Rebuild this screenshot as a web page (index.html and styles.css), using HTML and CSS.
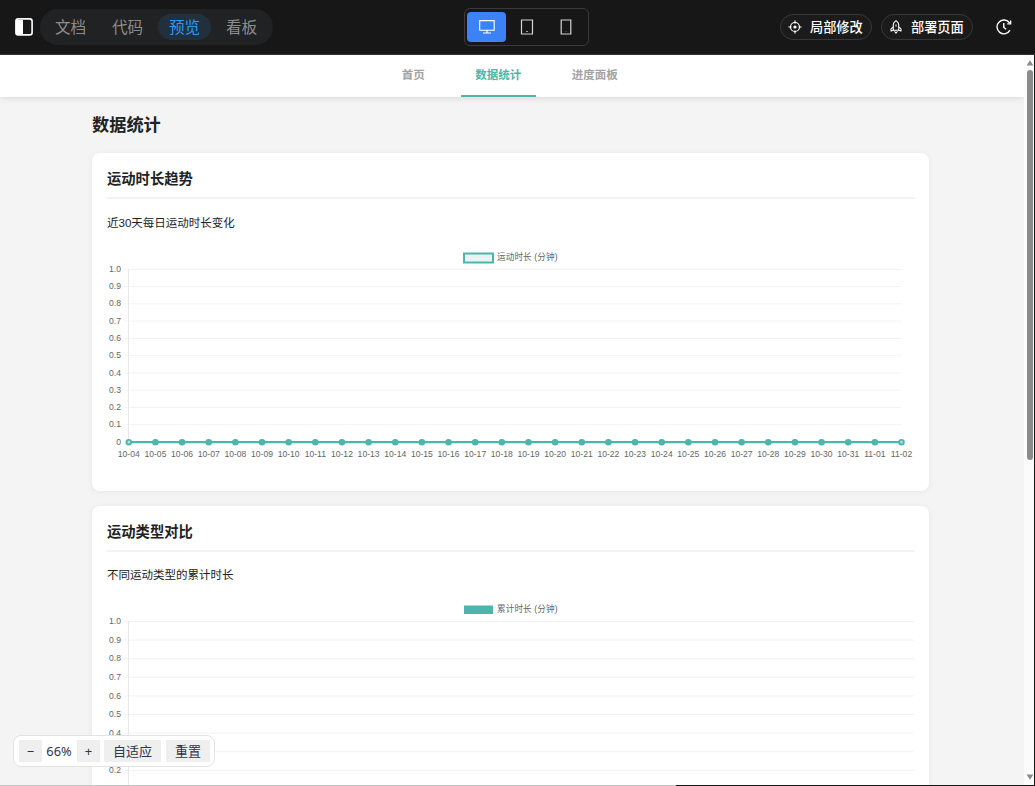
FILE: index.html
```html
<!DOCTYPE html>
<html lang="zh-CN">
  <head>
    <meta charset="utf-8">
    <title>数据统计</title>
    <link rel="stylesheet" href="styles.css">
  </head>
  <body>
    <header class="topbar">
      <div class="topbar-left">
        <svg class="icon-panel" width="18" height="18" viewBox="0 0 18 18">
          <rect x="0.9" y="0.9" width="16.2" height="16" rx="2.4" fill="none" stroke="#fff" stroke-width="1.6"/>
          <path d="M1 2h7v14H1z" fill="#fff"/>
        </svg>
        <nav class="mode-tabs">
          <a class="mode">文档</a>
          <a class="mode">代码</a>
          <a class="mode active">预览</a>
          <a class="mode">看板</a>
        </nav>
      </div>
      <div class="devices">
        <button class="device active">
          <svg width="16" height="14" viewBox="0 0 16 14" fill="none" stroke="#fff">
            <path d="M0.7 0.6h14.5v9.6H0.7z" stroke-width="1.1"/>
            <path d="M8 10v3M4 13h8" stroke-width="1.2"/>
          </svg>
        </button>
        <button class="device">
          <svg width="14" height="16" viewBox="0 0 14 16" fill="none" stroke="#d4d4d4">
            <path d="M1.5 1h11v14h-11z" stroke-width="1.2"/>
            <path d="M6.3 12.5h1.4" stroke-width="1.1"/>
          </svg>
        </button>
        <button class="device">
          <svg width="12" height="16" viewBox="0 0 12 16" fill="none" stroke="#d4d4d4">
            <path d="M1.2 1h9.6v14H1.2z" stroke-width="1.2"/>
            <path d="M5.5 12.5h1" stroke="#666"/>
          </svg>
        </button>
      </div>
      <div class="actions">
        <button class="action">
          <svg width="14" height="14" viewBox="0 0 14 14" fill="none" stroke="#fff" stroke-width="1.2">
            <circle cx="7" cy="7" r="4.5"/>
            <circle cx="7" cy="7" r="1.6" fill="#fff" stroke="none"/>
            <path d="M7 0.4v3M7 10.6v3M0.4 7h3M10.6 7h3"/>
          </svg>
          局部修改
        </button>
        <button class="action">
          <svg width="14" height="14" viewBox="0 0 14 14" fill="none" stroke="#fff" stroke-width="1.05" stroke-linejoin="round">
            <path d="M4.3 10.3V4.6C4.3 3 5.5 1.5 7 0.7c1.5 0.8 2.7 2.3 2.7 3.9v5.7z"/>
            <path d="M4.3 6.8L2 9v2.1l2.3-0.8M9.7 6.8L12 9v2.1l-2.3-0.8"/>
            <path d="M7 4.6v2"/>
            <path d="M5.5 11.2L7 13.2l1.5-2"/>
          </svg>
          部署页面
        </button>
        <svg class="icon-history" width="16" height="16" viewBox="0 0 16 16" fill="none" stroke="#fff" stroke-width="1.4">
          <path d="M14 11.2A6.9 6.9 0 1 1 13.6 4"/>
          <path d="M14.6 1.5v3.4h-3.4"/>
          <path d="M7.8 4v4.5l2.4 1.8"/>
        </svg>
      </div>
    </header>

    <div class="preview">
      <main class="page">
        <nav class="page-nav">
          <a class="nav-item">首页</a>
          <a class="nav-item active">数据统计</a>
          <a class="nav-item">进度面板</a>
        </nav>
        <div class="container">
          <h1>数据统计</h1>
          <section class="card">
            <h2>运动时长趋势</h2>
            <p>近30天每日运动时长变化</p>
            <svg class="chart" id="trendChart" width="808" height="232"></svg>
          </section>
          <section class="card">
            <h2>运动类型对比</h2>
            <p class="type-note">不同运动类型的累计时长</p>
            <svg class="chart" id="typeChart" width="808" height="232"></svg>
          </section>
        </div>
      </main>
      <div class="scrollbar">
        <svg width="8" height="6" viewBox="0 0 8 6"><path d="M4 0.3L7.4 5.4H0.6z" fill="#8b8b8b"/></svg>
        <div class="thumb"></div>
        <svg class="arrow-down" width="8" height="6" viewBox="0 0 8 6"><path d="M4 5.7L7.4 0.6H0.6z" fill="#8b8b8b"/></svg>
      </div>
    </div>
    <div class="bottom-line"></div>

    <div class="zoom-bar">
      <button class="zoom-btn">−</button>
      <span class="zoom-value">66%</span>
      <button class="zoom-btn">+</button>
      <button class="zoom-btn wide fit">自适应</button>
      <button class="zoom-btn wide">重置</button>
    </div>
    <script src="charts.js"></script>
  </body>
</html>
```
FILE: styles.css
```css
* {
  box-sizing: border-box;
}
body {
  margin: 0;
  height: 786px;
  overflow: hidden;
  display: flex;
  flex-direction: column;
  background-color: #171717;
  font-family: "Liberation Sans", "Noto Sans CJK SC", sans-serif;
  color: #222;
}
button {
  border: 0;
  padding: 0;
  font-family: "Noto Sans", "Noto Sans CJK SC", sans-serif;
}

/* top bar */
.topbar {
  height: 55px;
  flex: none;
  display: grid;
  grid-template-columns: 464px 125px 1fr;
  align-items: center;
  border-bottom: 1px solid #333;
  background-color: #171717;
}
.topbar-left {
  display: flex;
  align-items: center;
  padding-left: 15px;
  gap: 7px;
}
.mode-tabs {
  display: flex;
  align-items: center;
  gap: 4px;
  width: 233px;
  height: 36px;
  padding-left: 4px;
  border-radius: 18px;
  background-color: #212223;
}
.mode {
  width: 53px;
  height: 26px;
  line-height: 25px;
  border-radius: 13px;
  text-align: center;
  font-family: "Noto Sans CJK SC", sans-serif;
  font-size: 15.6px;
  color: #8c8c8c;
}
.mode.active {
  background-color: #22303d;
  color: #2b9cf5;
}
.devices {
  display: flex;
  height: 38px;
  padding: 3px 2px;
  border: 1px solid #3a3a3a;
  border-radius: 6px;
}
.device {
  width: 39px;
  height: 30px;
  display: flex;
  align-items: center;
  justify-content: center;
  border-radius: 4px;
  background: none;
}
.device.active {
  background-color: #3b82f6;
}
.device + .device {
  margin-left: 1px;
}
.device + .device + .device {
  margin-left: 0;
}
.actions {
  display: flex;
  align-items: center;
  justify-content: flex-end;
  padding-right: 23px;
  gap: 9px;
}
.action {
  width: 92px;
  height: 26px;
  display: flex;
  align-items: center;
  gap: 8px;
  padding: 0 0 1px 7px;
  border: 1px solid #383838;
  border-radius: 13px;
  background-color: #1b1b1b;
  color: #fff;
  font-family: "Noto Sans CJK SC", sans-serif;
  font-size: 13.2px;
  font-weight: 500;
  white-space: nowrap;
}
.action svg {
  margin-top: 1px;
}
.icon-history {
  margin-left: 14px;
}

/* preview frame */
.preview {
  flex: 1;
  min-height: 0;
  display: flex;
  margin-right: 1px;
  overflow: hidden;
}
.page {
  flex: 1;
  height: 730px;
  overflow: hidden;
  background-color: #f4f4f4;
}
.page-nav {
  height: 42px;
  display: flex;
  justify-content: center;
  gap: 21.5px;
  padding-right: 4.5px;
  background-color: #fff;
  box-shadow: 0 1px 6px rgba(0, 0, 0, 0.12);
}
.nav-item {
  padding: 0 14.5px;
  line-height: 39px;
  font-family: "Noto Sans CJK SC", sans-serif;
  font-size: 11.5px;
  font-weight: bold;
  color: #a3a3a3;
}
.nav-item.active {
  color: #4db6ac;
  border-bottom: 2px solid #4db6ac;
}
.container {
  width: 837px;
  margin-left: 92px;
}
h1 {
  margin: 0;
  height: 56px;
  line-height: 57px;
  font-size: 17.2px;
}
.card {
  height: 338px;
  margin-bottom: 15px;
  padding: 14px 14px 14px 15px;
  border-radius: 8px;
  background-color: #fff;
  box-shadow: 0 1px 6px rgba(0, 0, 0, 0.06);
}
h2 {
  margin: 0;
  height: 32px;
  line-height: 25px;
  border-bottom: 2px solid #f3f3f3;
  font-size: 14.3px;
}
p {
  margin: 14px 0 0;
  height: 32px;
  line-height: 21px;
  font-size: 11.5px;
}
.type-note {
  line-height: 19px;
}
.chart {
  display: block;
}
.chart text {
  font-size: 8.6px;
  fill: #666;
}

/* scrollbar */
.scrollbar {
  width: 10px;
  display: flex;
  flex-direction: column;
  align-items: center;
  padding: 5px 0 5px 1px;
  background-color: #fbfbfb;
}
.scrollbar svg {
  flex: none;
}
.thumb {
  width: 6px;
  height: 390px;
  margin-top: 4px;
  border-radius: 3px;
  background-color: #8b8b8b;
}
.arrow-down {
  margin-top: auto;
}
.bottom-line {
  width: 676px;
  height: 1px;
  flex: none;
  background-color: #c4c4c4;
}

/* floating zoom control */
.zoom-bar {
  position: absolute;
  left: 13px;
  top: 735px;
  width: 202px;
  height: 32px;
  display: flex;
  align-items: center;
  padding-left: 5px;
  border: 1px solid #e3e3e5;
  border-radius: 8px;
  background-color: #fff;
}
.zoom-btn {
  width: 23px;
  height: 22px;
  line-height: 22px;
  background-color: #efefef;
  font-size: 13px;
  color: #2f3447;
}
.zoom-value {
  width: 35px;
  padding-right: 1px;
  text-align: center;
  font-family: "Noto Sans", sans-serif;
  font-size: 12.8px;
  color: #2f3447;
}
.zoom-btn.wide {
  width: 44px;
  margin-left: 5px;
}
.zoom-btn.wide.fit {
  width: 57px;
  margin-left: 4px;
}
```
FILE: charts.js
```javascript
var TEAL = "#4db6ac";

function add(svg, tag, attrs, text) {
  var el = document.createElementNS("http://www.w3.org/2000/svg", tag);
  for (var key in attrs) {
    el.setAttribute(key, attrs[key]);
  }
  if (text) {
    el.textContent = text;
  }
  svg.appendChild(el);
}

// horizontal grid lines, value labels and the vertical axis
function drawGrid(svg, top, step, right) {
  for (var i = 0; i <= 10; i++) {
    var y = top + i * step;
    var label = i === 10 ? "0" : (1 - i / 10).toFixed(1);
    add(svg, "line", { x1: 17, x2: right, y1: y, y2: y, stroke: "#f3f3f3" });
    add(svg, "text", { x: 14, y: y + 2.6, "text-anchor": "end" }, label);
  }
  add(svg, "line", { x1: 21.5, x2: 21.5, y1: top, y2: top + step * 10, stroke: "#e8e8e8" });
}

function drawTrend() {
  var svg = document.getElementById("trendChart");
  add(svg, "rect", { x: 357, y: 8.5, width: 29, height: 9, fill: "#e6f5f3", stroke: TEAL, "stroke-width": 2 });
  add(svg, "text", { x: 390, y: 15, textLength: 60.5 }, "运动时长 (分钟)");
  drawGrid(svg, 24.3, 17.27, 794.5);

  var date = new Date(2025, 9, 4);
  add(svg, "line", { x1: 21.8, x2: 794.5, y1: 197.2, y2: 197.2, stroke: TEAL, "stroke-width": 2.3 });
  for (var i = 0; i < 30; i++) {
    var x = 21.8 + i * 26.645;
    var day = ("0" + date.getDate()).slice(-2);
    var edge = i === 0 || i === 29;
    add(svg, "circle", { cx: x, cy: 197.2, r: edge ? 2.3 : 2.7, fill: edge ? "#b8e0dc" : TEAL, stroke: TEAL, "stroke-width": edge ? 1.9 : 1.2 });
    add(svg, "text", { x: x, y: 212.3, "text-anchor": "middle" }, (date.getMonth() + 1) + "-" + day);
    date.setDate(date.getDate() + 1);
  }
}

function drawTypes() {
  var svg = document.getElementById("typeChart");
  add(svg, "rect", { x: 357, y: 7.5, width: 29, height: 8.5, fill: TEAL });
  add(svg, "text", { x: 390, y: 14, textLength: 60.5 }, "累计时长 (分钟)");
  drawGrid(svg, 23.5, 18.6, 807);
}

drawTrend();
drawTypes();
```
